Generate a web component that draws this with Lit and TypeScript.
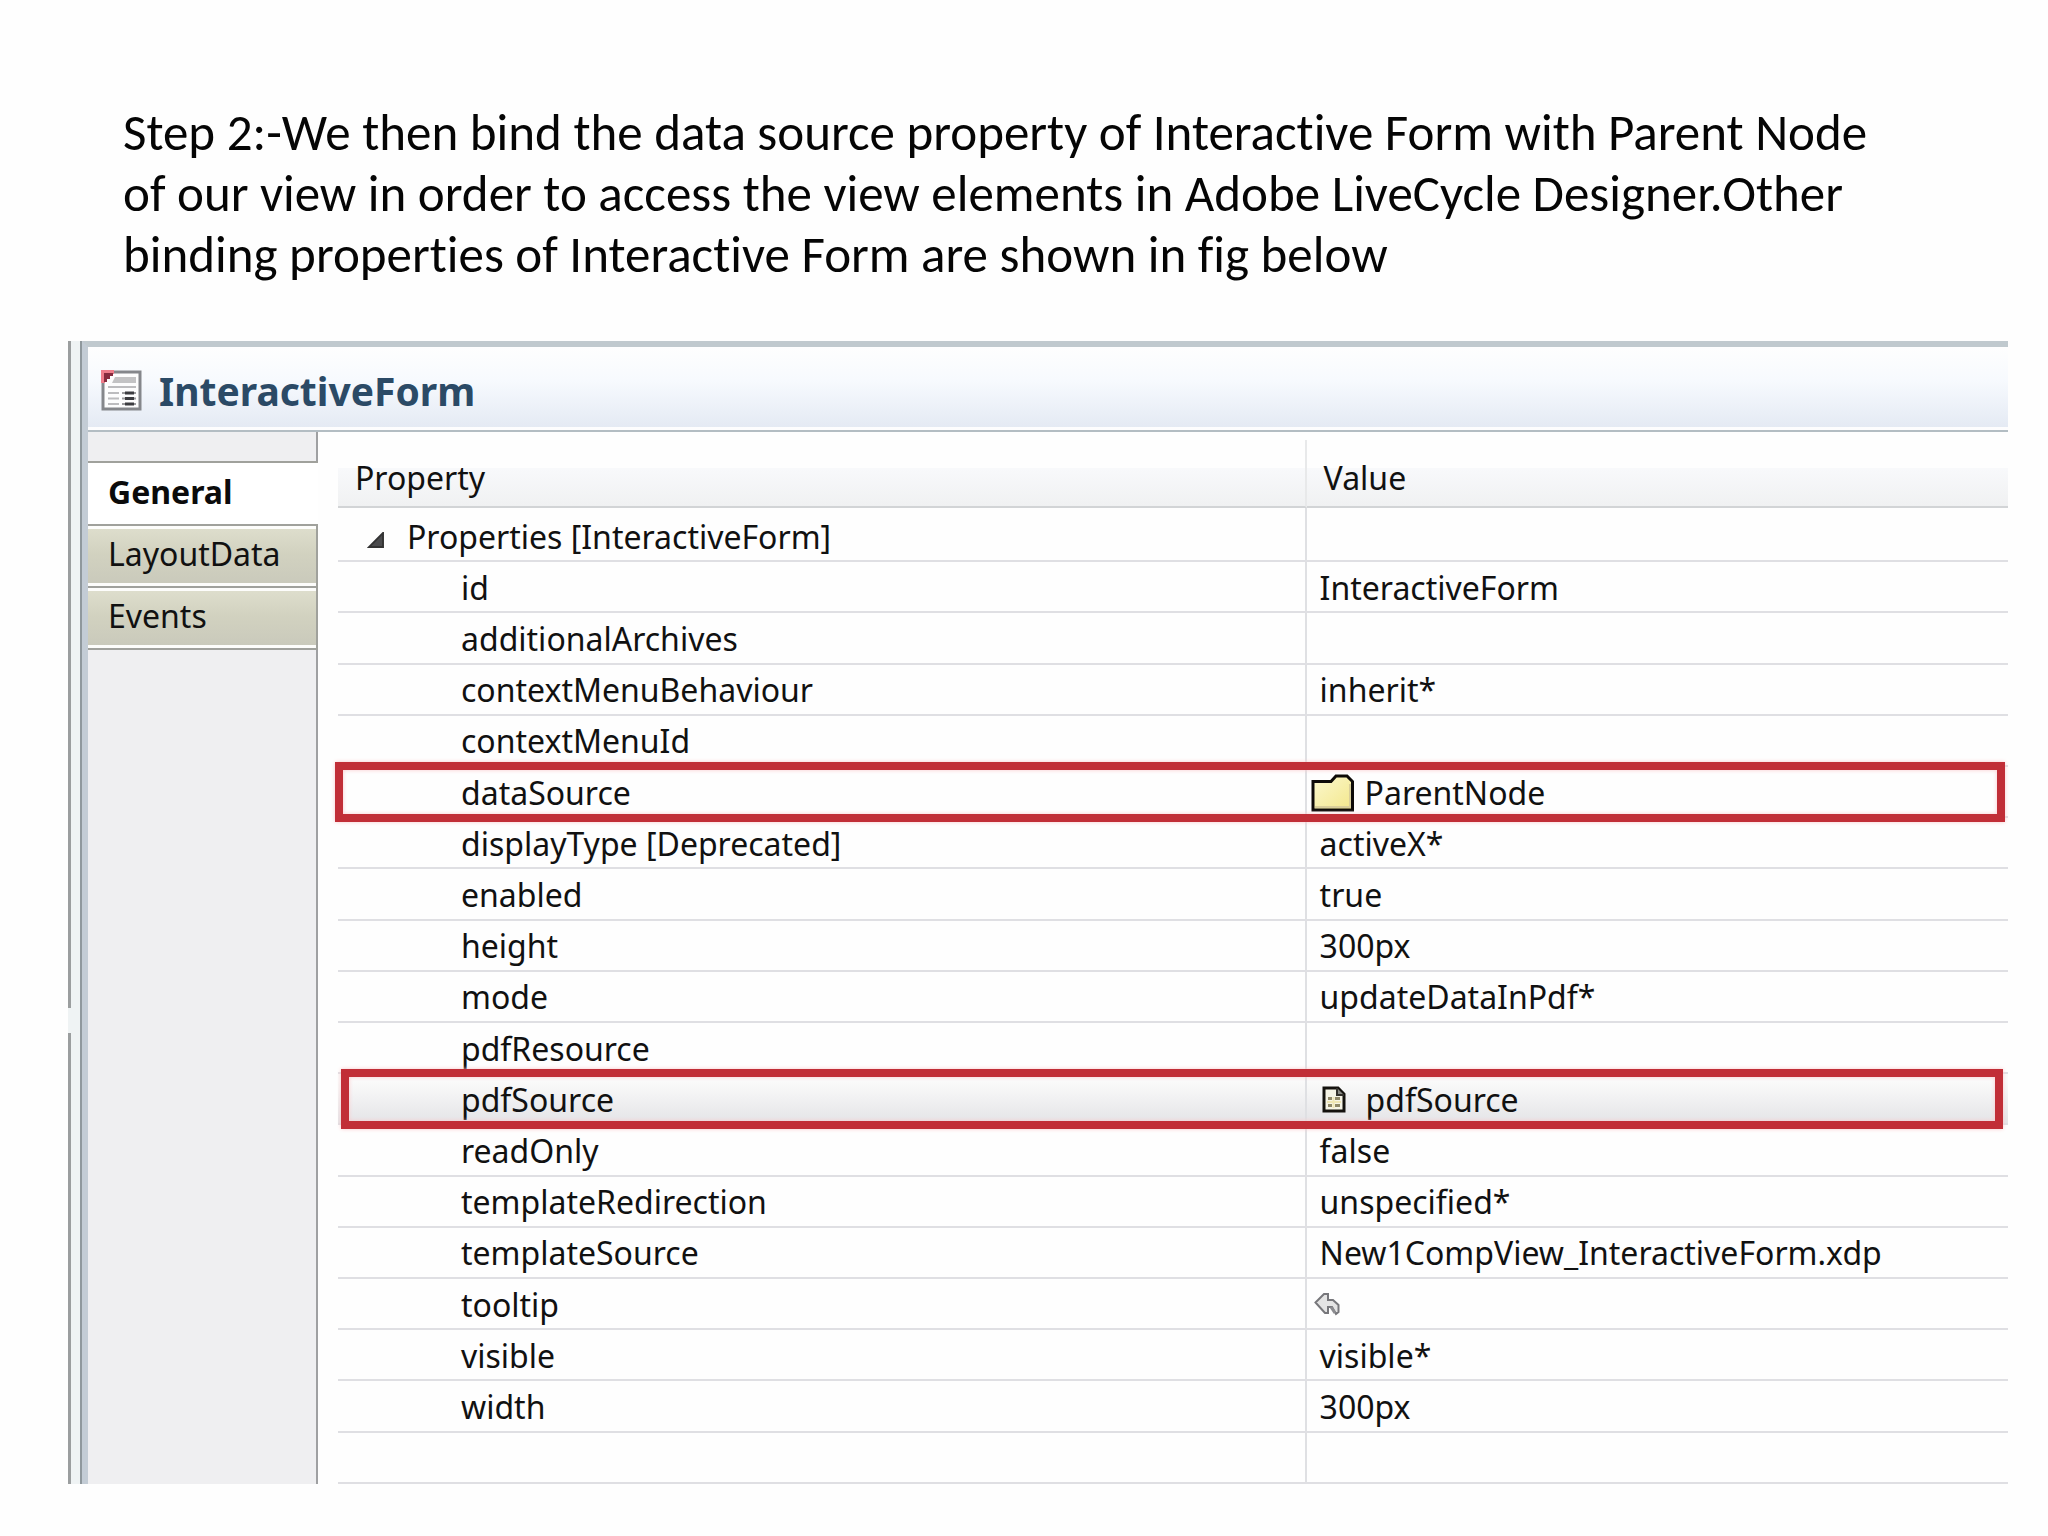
import { LitElement, html, css, nothing } from "lit";
import { customElement, state } from "lit/decorators.js";
import { classMap } from "lit/directives/class-map.js";

type IconName = "folder" | "document" | "arrow";

interface PropertyRow {
  name: string;
  value: string;
  icon?: IconName;
  mark?: "source" | "pdf";
}

const ROWS: PropertyRow[] = [
  { name: "id", value: "InteractiveForm" },
  { name: "additionalArchives", value: "" },
  { name: "contextMenuBehaviour", value: "inherit*" },
  { name: "contextMenuId", value: "" },
  { name: "dataSource", value: "ParentNode", icon: "folder", mark: "source" },
  { name: "displayType [Deprecated]", value: "activeX*" },
  { name: "enabled", value: "true" },
  { name: "height", value: "300px" },
  { name: "mode", value: "updateDataInPdf*" },
  { name: "pdfResource", value: "" },
  { name: "pdfSource", value: "pdfSource", icon: "document", mark: "pdf" },
  { name: "readOnly", value: "false" },
  { name: "templateRedirection", value: "unspecified*" },
  { name: "templateSource", value: "New1CompView_InteractiveForm.xdp" },
  { name: "tooltip", value: "", icon: "arrow" },
  { name: "visible", value: "visible*" },
  { name: "width", value: "300px" },
];

const TABS = ["General", "LayoutData", "Events"];

const folderIcon = html`<svg width="44" height="38" viewBox="0 0 44 38" aria-hidden="true">
  <defs>
    <linearGradient id="f" x1="0" y1="0" x2="1" y2="1">
      <stop offset="0" stop-color="#fbf8cf" /><stop offset="1" stop-color="#f3e78a" />
    </linearGradient>
  </defs>
  <path d="M2 7.500H20L25 2H36L42 8V36H2Z" fill="url(#f)" />
  <path d="M39 10V33H4" fill="none" stroke="#d9cf9a" stroke-width="2" />
  <path d="M2 36V7.500H20L25 2H36L41.500 7.500V36Z" fill="none" stroke="#0d0a08" stroke-width="3" />
</svg>`;

const documentIcon = html`<svg width="24" height="27" viewBox="0 0 24 27" aria-hidden="true">
  <path d="M2 2H16L22 8V25H2Z" fill="#f6f4e6" stroke="#14120e" stroke-width="3" />
  <path d="M15 2V9H22" fill="#8a8a84" stroke="#33312c" stroke-width="2" />
  <path d="M6 12.500H10M13 12.500H18M6 19.500H10M13 19.500H18" stroke="#8f8868" stroke-width="3" />
  <path d="M5 16H19M11.500 11V22" stroke="#efe6b4" stroke-width="2" />
</svg>`;

const arrowIcon = html`<svg width="26" height="24" viewBox="0 0 26 24" aria-hidden="true">
  <path
    d="M1.500 10.500 10 2H14V8H19L24.500 13V20L22 22L18 15H14V21H11Z"
    fill="#e4e4e4" stroke="#77777b" stroke-width="2" />
  <path d="M17 15 21 21" stroke="#8c8c90" stroke-width="3" />
</svg>`;

const ICONS = { folder: folderIcon, document: documentIcon, arrow: arrowIcon };

@customElement("app-root")
export class AppRoot extends LitElement {
  @state() private activeTab = "General";

  static styles = css`
    :host {
      display: block;
    }
    .slide {
      box-sizing: border-box;
      min-height: 100vh;
      display: flex;
      flex-direction: column;
      padding: 102px 40px 52px 68px;
      background: #fefefe;
      color: #111;
    }
    .intro {
      margin: 0 90px 0 55px;
      padding-bottom: 56px;
      font: 400 51px/61px Carlito, Calibri, Lato, sans-serif;
      font-variant-ligatures: none;
      color: #050505;
    }
    .shot {
      flex: 1;
      display: flex;
      font: 400 32px/44px "Noto Sans", "Open Sans", sans-serif;
    }
    .sash {
      display: flex;
      flex-direction: column;
      width: 12px;
      background: #eff3f4;
    }
    .sash-line {
      width: 3px;
      flex: 666;
      background: #9b9e9f;
    }
    .sash-line.lower {
      flex: 451;
    }
    .sash-grip {
      height: 25px;
    }
    .panel {
      flex: 1;
      display: flex;
      flex-direction: column;
      border-left: 2px solid #8f989d;
      min-width: 0;
    }
    .frame {
      flex: 1;
      display: flex;
      flex-direction: column;
      border-top: 6px solid #c0c9ce;
      border-left: 6px solid #c3ccd5;
    }
    .title {
      display: flex;
      align-items: center;
      gap: 16px;
      height: 79px;
      padding: 4px 14px 0 13px;
      background: linear-gradient(#fefefe 0%, #f7fafe 40%, #e3e9f3 100%);
      border-bottom: 2px solid #b3bdc3;
      box-shadow: inset 0 -3px #fdfdfe;
    }
    .title h1 {
      margin: 0;
      font-size: 39px;
      line-height: 48px;
      font-weight: 700;
      color: #2b4a66;
    }
    svg {
      display: block;
      flex: none;
    }
    .body {
      flex: 1;
      display: flex;
    }
    .side {
      box-sizing: border-box;
      width: 230px;
      display: flex;
      flex-direction: column;
    }
    .side-top,
    .side-rest {
      background: #efeff1;
      border-right: 2px solid #9fa0a2;
    }
    .side-top {
      height: 29px;
    }
    .side-rest {
      flex: 1;
    }
    .tab {
      box-sizing: border-box;
      height: 62px;
      margin: 0;
      padding: 0 0 4px 20px;
      border: 0 solid #a0a19c;
      border-width: 0 2px 2px 0;
      border-radius: 0;
      background: linear-gradient(#dfdfce, #d2d2c0 45%, #c9c9bb);
      box-shadow: inset 0 3px #fdfdfb, inset 0 -3px #fdfdfb;
      color: #111;
      font: inherit;
      text-align: left;
      cursor: pointer;
    }
    .tab.active {
      height: 65px;
      border-width: 2px 0 2px 0;
      background: #fff;
      box-shadow: none;
      font-weight: 700;
      color: #0b0b0b;
    }
    .grid {
      flex: 1;
      display: flex;
      margin: 8px 0 0 20px;
    }
    table {
      width: 100%;
      height: 100%;
      table-layout: fixed;
      border-collapse: separate;
      border-spacing: 0;
    }
    .col-name {
      width: 58%;
    }
    th,
    td {
      box-sizing: border-box;
      padding: 2px 0 0;
      height: 51px;
      font-weight: 400;
      text-align: left;
      vertical-align: middle;
      white-space: nowrap;
      border-bottom: 2px solid #dfdfe3;
    }
    .name,
    .group {
      border-right: 2px solid #dfe0e3;
    }
    thead th {
      height: 68px;
      padding: 10px 0 0 17px;
      background: linear-gradient(#fefefe 42%, #f8f9fb 43%, #f0f1f2);
      border-bottom: 2px solid #d2d4d6;
    }
    thead .name {
      border-right-color: #e8e9ea;
    }
    .group {
      height: 54px;
      padding: 6px 0 0 29px;
    }
    .group-label {
      display: flex;
      align-items: center;
      gap: 23px;
    }
    .toggle {
      display: block;
      margin: 0;
      padding: 6px 0 0;
      border: 0;
      background: none;
      cursor: pointer;
    }
    tbody .name {
      padding-left: 123px;
    }
    .value {
      padding-left: 13px;
    }
    .value.folder {
      padding-left: 4px;
    }
    .value.document {
      padding-left: 15px;
    }
    .value.arrow {
      padding: 0 0 0 7px;
    }
    .with-icon {
      display: flex;
      align-items: center;
      gap: 10px;
    }
    .document .with-icon {
      gap: 20px;
    }
    .mark {
      position: relative;
    }
    .mark .name::after {
      content: "";
      position: absolute;
      z-index: 1;
      border: 8px solid #c12e37;
      box-shadow: 0 0 4px #fbc9cc, inset 0 0 4px #fbc9cc;
      pointer-events: none;
    }
    .mark.source .name::after {
      inset: -5px 3px -4px -3px;
    }
    .mark.pdf .name::after {
      inset: -5px 5px -4px 3px;
    }
    .mark.pdf {
      background: linear-gradient(#fafafa 15%, #e3e3e6);
    }
  `;

  private row(r: PropertyRow) {
    const rowClass = { mark: !!r.mark, source: r.mark === "source", pdf: r.mark === "pdf" };
    const valueClass = {
      value: true,
      folder: r.icon === "folder",
      document: r.icon === "document",
      arrow: r.icon === "arrow",
    };
    return html`<tr class=${classMap(rowClass)}>
      <th class="name" scope="row">${r.name}</th>
      <td class=${classMap(valueClass)}>
        ${r.icon
          ? html`<div class="with-icon">${ICONS[r.icon]}${r.value ? html`<span>${r.value}</span>` : nothing}</div>`
          : r.value}
      </td>
    </tr>`;
  }

  render() {
    return html`<main class="slide">
      <p class="intro">
        Step 2:-We then bind the data source property of Interactive Form with Parent Node of our view in order to
        access the view elements in Adobe LiveCycle Designer.Other binding properties of Interactive Form are shown in
        fig below
      </p>
      <section class="shot">
        <div class="sash">
          <div class="sash-line"></div>
          <div class="sash-grip"></div>
          <div class="sash-line lower"></div>
        </div>
        <div class="panel">
          <div class="frame">
            <header class="title">
              <svg width="42" height="42" viewBox="0 0 42 42" aria-hidden="true">
                <rect x="2" y="2" width="37" height="37" fill="#fdfdfd" stroke="#85878b" stroke-width="3" />
                <path d="M14 7H35V13H11Z" fill="#c3c3c4" />
                <path d="M7 17H35M7 23H18M7 28.500H18M7 34H18" stroke="#bcbcbe" stroke-width="2" />
                <path d="M21 23H35M21 28.500H35M21 34H35" stroke="#9a9a9c" stroke-width="2" />
                <path d="M24 23H33M24 28.500H33M24 34H33" stroke="#3c3c40" stroke-width="3" />
                <path d="M0 0H13V4H4V13H0Z" fill="#ee7d8a" />
                <path d="M3 3H12V6H9V9H6V12H3Z" fill="#872c3e" />
              </svg>
              <h1>InteractiveForm</h1>
            </header>
            <div class="body">
              <nav class="side" aria-label="Sections">
                <div class="side-top"></div>
                ${TABS.map(
                  (t) => html`<button
                    type="button"
                    class=${classMap({ tab: true, active: t === this.activeTab })}
                    @click=${() => (this.activeTab = t)}
                  >${t}</button>`
                )}
                <div class="side-rest"></div>
              </nav>
              <div class="grid">
                <table>
                  <colgroup><col class="col-name" /><col /></colgroup>
                  <thead>
                    <tr>
                      <th class="name" scope="col">Property</th>
                      <th scope="col">Value</th>
                    </tr>
                  </thead>
                  <tbody>
                    <tr>
                      <th class="group" scope="row">
                        <div class="group-label">
                          <button class="toggle" type="button" aria-label="Collapse" aria-expanded="true">
                            <svg width="17" height="16" viewBox="0 0 18 17">
                              <path d="M17 1V16H2Z" fill="#4b4b4d" stroke="#333" stroke-width="2" />
                            </svg>
                          </button>
                          <span>Properties [InteractiveForm]</span>
                        </div>
                      </th>
                      <td></td>
                    </tr>
                    ${ROWS.map((r) => this.row(r))}
                    <tr>
                      <td class="name"></td>
                      <td></td>
                    </tr>
                  </tbody>
                </table>
              </div>
            </div>
          </div>
        </div>
      </section>
    </main>`;
  }
}
